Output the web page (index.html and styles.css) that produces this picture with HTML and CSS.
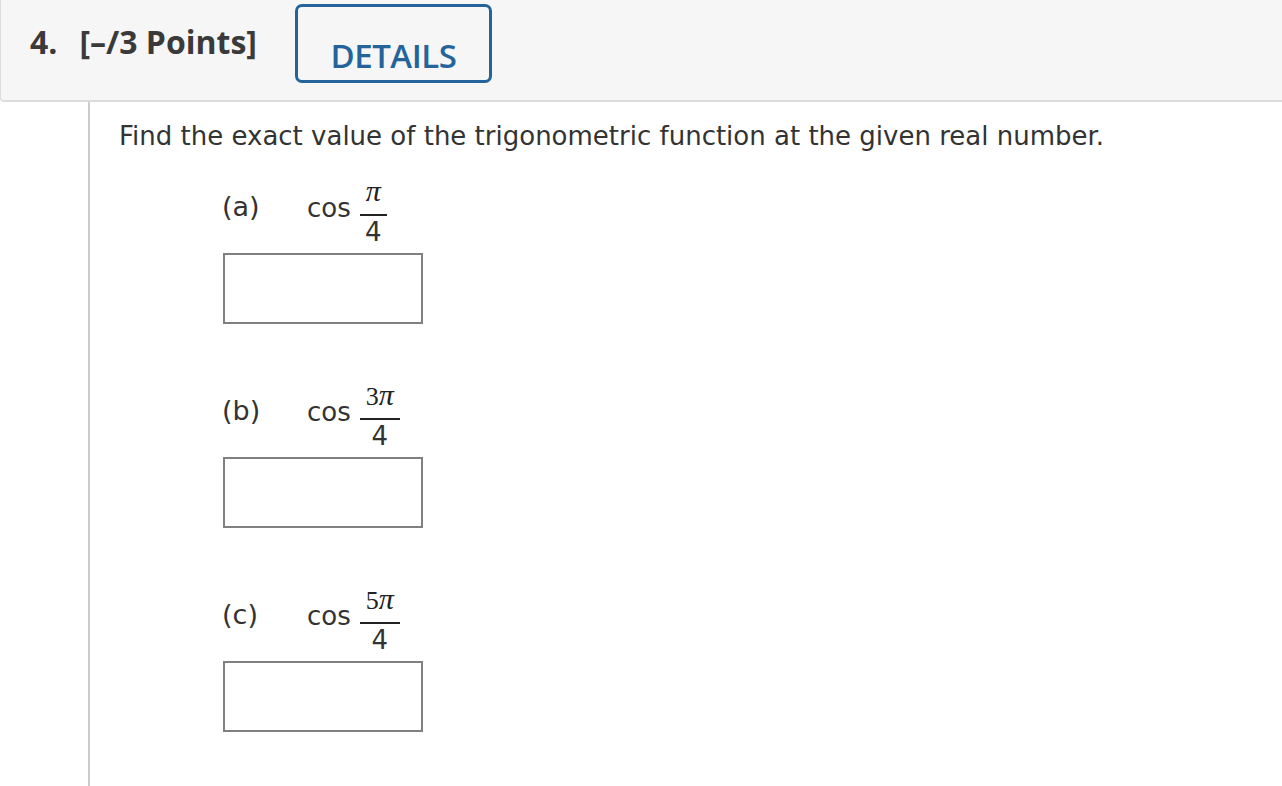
FILE: index.html
```html
<!DOCTYPE html>
<html>
<head>
<meta charset="utf-8">
<link rel="stylesheet" href="styles.css">
</head>
<body>
<div class="header">
  <div class="title"><span class="qnum">4.</span><span>[–/3 Points]</span></div>
  <div class="details">DETAILS</div>
</div>
<div class="content">
  <p class="question">Find the exact value of the trigonometric function at the given real number.</p>
  <div class="part">
    <div class="row">
      <span class="label">(a)</span>
      <span class="fn">cos</span>
      <span class="frac"><span class="num"><i class="pi">π</i></span><span class="den">4</span></span>
    </div>
    <div class="answer"></div>
  </div>
  <div class="part">
    <div class="row">
      <span class="label">(b)</span>
      <span class="fn">cos</span>
      <span class="frac"><span class="num">3<i class="pi">π</i></span><span class="den">4</span></span>
    </div>
    <div class="answer"></div>
  </div>
  <div class="part">
    <div class="row">
      <span class="label">(c)</span>
      <span class="fn">cos</span>
      <span class="frac"><span class="num">5<i class="pi">π</i></span><span class="den">4</span></span>
    </div>
    <div class="answer"></div>
  </div>
</div>
</body>
</html>
```
FILE: styles.css
```css
html, body {
  margin: 0;
  padding: 0;
  background: #fff;
}
body {
  width: 1282px;
  height: 786px;
  overflow: hidden;
}
.header {
  box-sizing: border-box;
  height: 102px;
  background: #f6f6f6;
  border-left: 1px solid #dcdcdc;
  border-bottom: 2px solid #dcdcdc;
  border-bottom-left-radius: 4px;
  display: flex;
  align-items: flex-start;
  padding-left: 29px;
}
.title {
  font-family: "Open Sans", sans-serif;
  font-weight: 700;
  font-size: 32px;
  line-height: 40px;
  color: #3a3a3a;
  margin-top: 22px;
  display: flex;
}
.qnum {
  margin-right: 22px;
}
.details {
  box-sizing: border-box;
  margin-left: 38px;
  margin-top: 4px;
  width: 197px;
  height: 79px;
  border: 3px solid #24649a;
  border-radius: 7px;
  font-family: "Open Sans", sans-serif;
  font-weight: 600;
  font-size: 33px;
  letter-spacing: -0.5px;
  color: #24649a;
  display: flex;
  justify-content: center;
  padding-top: 29px;
  line-height: 40px;
}
.content {
  margin-left: 88px;
  border-left: 2px solid #cccccc;
  padding-left: 29px;
  height: 684px;
  font-family: "DejaVu Sans", Verdana, sans-serif;
  color: #333;
}
.question {
  margin: 0;
  padding-top: 18px;
  font-size: 26px;
  line-height: 32px;
}
.part {
  margin-left: 103px;
  padding-top: 26px;
}
.part + .part {
  padding-top: 58px;
}
.row {
  display: flex;
  align-items: flex-start;
  font-size: 27px;
  line-height: 32px;
  height: 68px;
}
.label {
  width: 85px;
  padding-top: 13px;
}
.fn {
  font-size: 26px;
  margin-right: 9px;
  padding-top: 14px;
}
.frac {
  display: inline-flex;
  flex-direction: column;
  align-items: center;
}
.num {
  padding: 0 6px 10px;
  border-bottom: 2px solid #222;
  font-family: "Liberation Serif", serif;
  font-size: 26px;
  line-height: 26px;
  height: 26px;
  color: #222;
}
.den {
  font-size: 26px;
  line-height: 28px;
  padding-top: 2px;
}
.pi {
  font-family: "Liberation Serif", serif;
  font-size: 30px;
  font-weight: 400;
}
.answer {
  box-sizing: border-box;
  width: 200px;
  height: 71px;
  border: 2px solid #808080;
  margin-top: 7px;
  margin-left: 1px;
}
```
